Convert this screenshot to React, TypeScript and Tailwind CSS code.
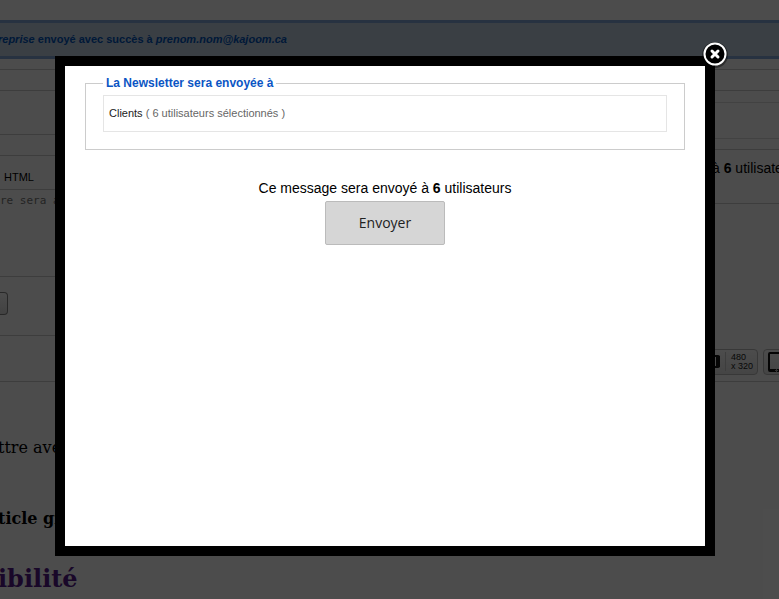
import { useState } from 'react';

function DeviceButtons() {
  return (
    <div className="flex gap-[5px]">
      <button
        type="button"
        aria-label="480 x 320"
        className="flex h-[26px] w-[68px] shrink-0 items-center justify-end rounded border border-[#bbb] bg-gradient-to-b from-white to-[#e6e6e6] pb-px pr-1"
      >
        <svg width="30" height="13" viewBox="0 0 30 13" className="shrink-0">
          <rect x="4" y="1" width="25" height="11" rx="1" fill="none" stroke="#111" strokeWidth="2" />
          <rect x="26" y="1" width="4" height="11" fill="#111" />
        </svg>
        <span className="mx-[5px] h-[19px] border-l border-[#ccc]" />
        <span className="text-left text-[9px] leading-[9px] text-[#222]">
          480
          <br />
          x&nbsp;320
        </span>
      </button>
      <button
        type="button"
        aria-label="Tablette"
        className="flex h-[26px] w-[60px] shrink-0 items-center rounded border border-[#bbb] bg-gradient-to-b from-white to-[#e6e6e6] pb-px pl-1"
      >
        <svg width="18" height="20" viewBox="0 0 18 20" className="shrink-0">
          <path d="M2 0h14a2 2 0 0 1 2 2v16a2 2 0 0 1-2 2H2a2 2 0 0 1-2-2V2a2 2 0 0 1 2-2zm0 2v15h14V2z" fill="#111" fillRule="evenodd" />
          <path d="M7 18.500h3M8.500 17v3" stroke="#aaa" />
        </svg>
      </button>
    </div>
  );
}

function BackgroundPage() {
  return (
    <main className="-ml-[2px] min-h-screen overflow-hidden whitespace-nowrap bg-white pt-5 text-black">
      <p className="border-y-[3px] border-[#84a7db] bg-[#c3d2e5] py-2 text-[11px] font-bold leading-[17px] text-[#0055bb]">
        <em>reprise</em> envoyé avec succès à <em>prenom.nom@kajoom.ca</em>
      </p>

      <div className="mt-[10px] flex justify-between">
        <section className="w-1/2 overflow-hidden">
          <div className="h-[21px] border-t border-[#ccc]" />
          <div className="h-11 border-t border-[#ccc]" />
          <div className="h-[21px] border-t border-[#ccc]" />
          <div className="h-[34px] border-t border-[#ccc] pl-[6px] pt-[13px] text-[11px] leading-4">HTML</div>
          <div className="h-[87px] border-t border-[#ccc] pl-[2px] pt-[3px] font-['DejaVu_Sans_Mono',monospace] text-[11px] leading-4 text-[#777]">
            re sera affichée
          </div>
          <div className="h-[59px] border-t border-[#ccc] pt-[15px]">
            <button
              type="button"
              aria-label="Choisir"
              className="block h-[23px] w-[10px] rounded-r border border-l-0 border-[#888] bg-gradient-to-b from-white to-[#ddd]"
            />
          </div>
          <div className="h-[46px] border-t border-[#ccc]" />
        </section>

        <section className="w-[67px]">
          <div className="h-[21px] border-t border-[#ccc]" />
          <div className="h-3 border-t border-[#ccc]" />
          <div className="h-9 border-t border-[#ddd]" />
          <div className="h-[11px] border-t border-[#ddd]" />
          <p className="h-[54px] border-t border-[#ccc] pt-[10px] text-sm leading-4">
            à <b>6</b> utilisateurs
          </p>
          <div className="-ml-[22px] flex h-[178px] flex-col justify-end border-t border-[#ccc] pb-[6px]">
            <DeviceButtons />
          </div>
        </section>
      </div>

      <article className="border-t border-[#ccc] font-['DejaVu_Serif',serif]">
        <p className="pt-[54px] text-base leading-6">ttre avec</p>
        <p className="pt-[47px] text-base font-bold leading-6">ticle gratuit</p>
        <h2 className="pt-8 text-2xl font-bold leading-8 text-[#551a8b]">ibilité</h2>
      </article>
    </main>
  );
}

export default function App() {
  const [open, setOpen] = useState(true);

  return (
    <div className="relative h-screen overflow-hidden font-['Liberation_Sans',Arial,sans-serif]">
      <BackgroundPage />

      {open && (
        <div className="absolute inset-0 flex items-start justify-center bg-black/70 pr-[9px] pt-14">
          <div role="dialog" aria-modal="true" className="relative w-full max-w-[660px] border-[10px] border-black bg-white text-black">
            <button
              type="button"
              aria-label="Fermer"
              onClick={() => setOpen(false)}
              className="absolute -right-[25px] -top-[27px] cursor-pointer"
            >
              <svg width="30" height="30" viewBox="0 0 30 30" className="block">
                <circle cx="15" cy="16" r="13" fill="#000" opacity="0.4" />
                <circle cx="15" cy="15" r="10.500" fill="#000" stroke="#fff" strokeWidth="2" />
                <path d="M12 12l6 6M18 12l-6 6" stroke="#fff" strokeWidth="3" strokeLinecap="round" />
              </svg>
            </button>

            <form className="min-h-[480px] px-5 pt-[9px]" onSubmit={(e) => e.preventDefault()}>
              <fieldset className="border border-[#ccc] px-[17px] pb-[17px]">
                <legend className="px-[3px] text-xs font-bold leading-[17px] text-[#0b55c4]">
                  La Newsletter sera envoyée à
                </legend>
                <p className="mt-[3px] border border-[#e5e5e5] px-[5px] py-[10px] text-[11px] leading-[15px] text-[#666]">
                  <span className="text-[#222]">Clients</span> ( 6 utilisateurs sélectionnés )
                </p>
              </fieldset>

              <div className="mt-[30px] text-center">
                <p className="text-sm leading-4">
                  Ce message sera envoyé à <b>6</b> utilisateurs
                </p>
                <button
                  type="submit"
                  className="mt-[5px] h-11 cursor-pointer rounded-[2px] border border-[#bbb] bg-[#d6d6d6] px-[33px] font-['Open_Sans',sans-serif] text-sm text-[#222]"
                >
                  Envoyer
                </button>
              </div>
            </form>
          </div>
        </div>
      )}
    </div>
  );
}
